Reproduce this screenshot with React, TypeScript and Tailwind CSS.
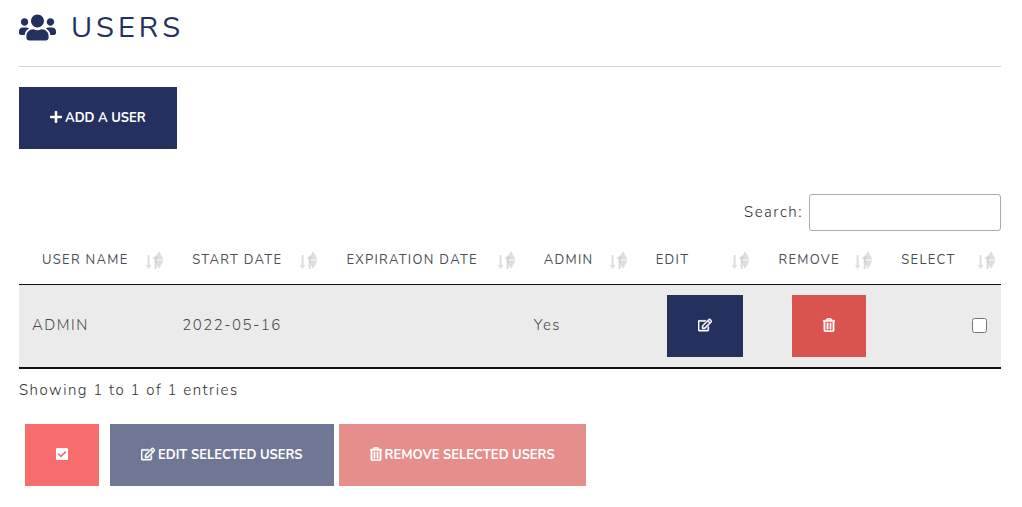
import { useState } from "react";
import type { ButtonHTMLAttributes } from "react";
import { FaUsers, FaPlus, FaRegEdit, FaRegTrashAlt, FaCheckSquare } from "react-icons/fa";

const columns = [
  { label: "USER NAME", width: "w-[15.3%]" },
  { label: "START DATE", width: "w-[15.7%]" },
  { label: "EXPIRATION DATE", width: "w-[20.1%]" },
  { label: "ADMIN", width: "w-[11.4%]" },
  { label: "EDIT", width: "w-[12.5%]" },
  { label: "REMOVE", width: "w-[12.5%]" },
  { label: "SELECT", width: "w-[12.5%]" },
];

function SortIcon() {
  return (
    <svg width="19" height="19" viewBox="0 0 19 19" aria-hidden="true" className="shrink-0">
      <g fill="#dedede">
        <path d="M2.6 4h2v10h1.9L3.6 18 .7 14h1.9z" />
        <path d="M14 0l4.5 8.5h-9z" />
        <path d="M9.5 9.5h9L14 18z" />
      </g>
      <path d="M9.7 18V8H7.8l2.9-4 2.9 4h-1.9v10z" fill="#c8c8c8" fillOpacity=".65" />
    </svg>
  );
}

function Button({ className = "", ...props }: ButtonHTMLAttributes<HTMLButtonElement>) {
  return (
    <button
      type="button"
      className={`inline-flex h-[62px] items-center justify-center gap-[3px] px-[31px] pt-[2px] text-[13px] font-bold text-white disabled:opacity-65 [&_svg]:mb-1 ${className}`}
      {...props}
    />
  );
}

export default function App() {
  const [selected, setSelected] = useState(false);
  const [query, setQuery] = useState("");

  return (
    <main className="bg-white pr-[21px] pl-[19px] font-['Nunito','Open_Sans',sans-serif] text-[15px] text-[#333]">
      <h1 className="flex h-[67px] items-center gap-[15px] border-b border-[#d3d3d3] pb-[11px] text-[29px] tracking-[4px] text-[#24305e]">
        <FaUsers className="size-[37px]" />
        USERS
      </h1>

      <Button className="mt-5 bg-[#24305e]">
        <FaPlus className="h-[14px] w-[12px]" />
        ADD A USER
      </Button>

      <div className="mt-[45px] flex items-center justify-end gap-[6px]">
        <label htmlFor="search" className="font-light tracking-widest">Search:</label>
        <input
          id="search"
          type="search"
          value={query}
          onChange={(e) => setQuery(e.target.value)}
          className="h-[37px] w-48 rounded-[3px] border border-[#aaa] bg-white px-2"
        />
      </div>

      <table className="mt-[3px] w-full table-fixed border-collapse border-b-2 border-[#111]">
        <thead>
          <tr className="border-b border-[#111]">
            {columns.map((c) => (
              <th key={c.label} className={`h-[50px] p-0 pt-[3px] text-left text-[13px] font-normal tracking-widest whitespace-nowrap text-[#4a4f55] ${c.width}`}>
                <div className="flex items-center justify-between pr-[5px] pl-[23px]">
                  {c.label}
                  <SortIcon />
                </div>
              </th>
            ))}
          </tr>
        </thead>
        <tbody>
          <tr className="h-[84px] bg-[#ebebeb] font-light tracking-widest text-[#4a4a4a]">
            <td className="px-[13px] pb-[2px]">ADMIN</td>
            <td className="px-[13px] pb-[2px]">2022-05-16</td>
            <td className="px-[13px] pb-[2px]" />
            <td className="px-[13px] pb-[2px]">Yes</td>
            <td className="px-3 text-right">
              <Button aria-label="Edit ADMIN" className="bg-[#24305e] align-middle">
                <FaRegEdit className="size-[14px]" stroke="currentColor" strokeWidth="20" />
              </Button>
            </td>
            <td className="px-3 text-right">
              <Button aria-label="Remove ADMIN" className="bg-[#d9534f] align-middle">
                <FaRegTrashAlt className="h-[14px] w-[12px]" stroke="currentColor" strokeWidth="20" />
              </Button>
            </td>
            <td className="px-[14px] pb-[2px] text-right">
              <input
                type="checkbox"
                aria-label="Select ADMIN"
                checked={selected}
                onChange={(e) => setSelected(e.target.checked)}
                className="size-[15px] align-middle"
              />
            </td>
          </tr>
        </tbody>
      </table>

      <p className="mt-[11px] leading-5 font-light tracking-widest">Showing 1 to 1 of 1 entries</p>

      <div className="mt-6 flex gap-[5px] pl-[6px]">
        <Button aria-label="Select all" className="mr-[6px] bg-[#f76c6c]" onClick={() => setSelected(true)}>
          <FaCheckSquare className="h-[14px] w-[12px]" />
        </Button>
        <Button disabled={!selected} className="bg-[#24305e]">
          <FaRegEdit className="size-[14px]" stroke="currentColor" strokeWidth="20" />
          EDIT SELECTED USERS
        </Button>
        <Button disabled={!selected} className="bg-[#d9534f]">
          <FaRegTrashAlt className="h-[14px] w-[12px]" stroke="currentColor" strokeWidth="20" />
          REMOVE SELECTED USERS
        </Button>
      </div>
    </main>
  );
}
